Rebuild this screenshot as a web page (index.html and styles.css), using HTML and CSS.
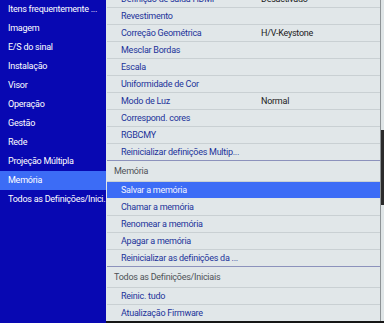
FILE: index.html
```html
<!DOCTYPE html>
<html lang="pt">
<head>
    <meta charset="UTF-8">
    <title>Menu</title>
    <link rel="stylesheet" href="styles.css">
</head>
<body>

<nav class="side">
    <div class="side-item">Itens frequentemente ...</div>
    <div class="side-item">Imagem</div>
    <div class="side-item">E/S do sinal</div>
    <div class="side-item">Instalação</div>
    <div class="side-item">Visor</div>
    <div class="side-item">Operação</div>
    <div class="side-item">Gestão</div>
    <div class="side-item">Rede</div>
    <div class="side-item">Projeção Múltipla</div>
    <div class="side-item active">Memória</div>
    <div class="side-item">Todos as Definições/Inici...</div>
</nav>

<main class="panel">
    <div class="list">
        <div class="row"><span>Definição de saída HDMI</span><span class="value">Desactivado</span></div>
        <div class="row"><span>Revestimento</span></div>
        <div class="row"><span>Correção Geométrica</span><span class="value">H/V-Keystone</span></div>
        <div class="row"><span>Mesclar Bordas</span></div>
        <div class="row"><span>Escala</span></div>
        <div class="row"><span>Uniformidade de Cor</span></div>
        <div class="row"><span>Modo de Luz</span><span class="value">Normal</span></div>
        <div class="row"><span>Correspond. cores</span></div>
        <div class="row"><span>RGBCMY</span></div>
        <div class="row last"><span>Reinicializar definições Multip...</span></div>

        <div class="group">Memória</div>
        <div class="row selected"><span>Salvar a memória</span></div>
        <div class="row"><span>Chamar a memória</span></div>
        <div class="row"><span>Renomear a memória</span></div>
        <div class="row"><span>Apagar a memória</span></div>
        <div class="row last"><span>Reinicializar as definições da ...</span></div>

        <div class="group">Todos as Definições/Iniciais</div>
        <div class="row"><span>Reinic. tudo</span></div>
        <div class="row"><span>Atualização Firmware</span></div>
    </div>
    <div class="scrollbar"><div class="thumb"></div></div>
</main>

</body>
</html>
```

FILE: styles.css
```css
body {
    margin: 0;
    width: 384px;
    height: 323px;
    display: flex;
    overflow: hidden;
    font-family: Roboto, "Noto Sans", sans-serif;
    font-size: 9px;
    letter-spacing: -0.25px;
}

/* Left column */
.side {
    width: 106px;
    flex-shrink: 0;
    background-color: #0808b2;
    color: white;
}

.side-item {
    height: 19px;
    line-height: 19px;
    padding-left: 8px;
    white-space: nowrap;
}

.side-item.active {
    background-color: #3c6cf6;
}

/* Right panel */
.panel {
    flex: 1;
    display: flex;
    background-color: #e1e7e9;
    border-bottom: 2px solid #161616;
    overflow: hidden;
}

.list {
    flex: 1;
    margin-top: -9px;
    padding-left: 1px;
}

.row {
    height: 17px;
    box-sizing: border-box;
    display: grid;
    grid-template-columns: 140px 1fr;
    align-items: center;
    padding-left: 14px;
    color: #22339a;
    border-bottom: 1px solid #c9d0d3;
    white-space: nowrap;
}

.row .value {
    color: #1c1c1c;
}

.row.last {
    border-bottom: 1px solid #8c92bc;
}

.row.selected {
    background-color: #3c6cf6;
    color: #f2f4ff;
    border-bottom-color: #dfe5e8;
}

.group {
    height: 21px;
    box-sizing: border-box;
    line-height: 20px;
    padding-left: 7px;
    color: #4e5256;
    border-bottom: 1px solid #c9d0d3;
}

.scrollbar {
    width: 3px;
    border-left: 1px solid #8d9396;
    background-color: #dfe5e7;
    padding-top: 130px;
}

.thumb {
    height: 75px;
    background-color: #2a2a2a;
}
```
